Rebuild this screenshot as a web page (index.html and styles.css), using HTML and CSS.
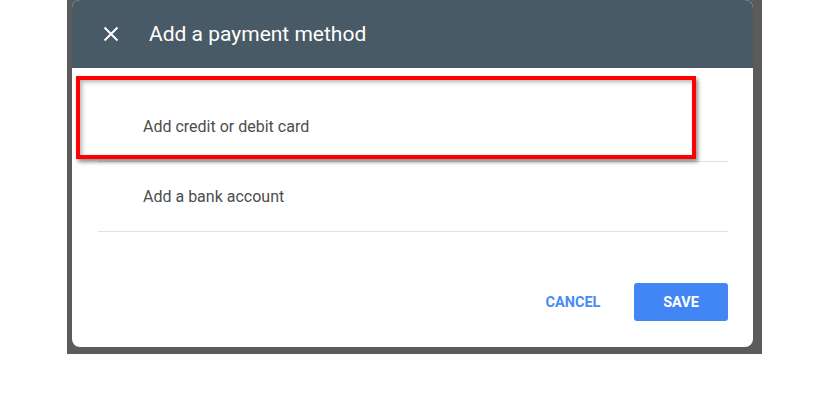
FILE: index.html
```html
<!DOCTYPE html>
<html>
<head>
<meta charset="utf-8">
<link rel="stylesheet" href="styles.css">
</head>
<body>
<div class="backdrop">
  <div class="dialog">
    <div class="header">
      <svg class="close" width="16" height="16" viewBox="0 0 16 16"><path d="M1.5 1.5L14.5 14.5M14.5 1.5L1.5 14.5" stroke="#fff" stroke-width="2" fill="none"/></svg>
      <span class="title">Add a payment method</span>
    </div>
    <div class="list">
      <div class="row">Add credit or debit card</div>
      <div class="row">Add a bank account</div>
    </div>
    <div class="footer">
      <button class="btn cancel">CANCEL</button>
      <button class="btn save">SAVE</button>
    </div>
    <div class="highlight"></div>
  </div>
</div>
</body>
</html>
```
FILE: styles.css
```css
html, body {
  margin: 0;
  padding: 0;
  background: #fff;
  font-family: Roboto, "Liberation Sans", sans-serif;
}
.backdrop {
  margin-left: 67px;
  width: 681px;
  height: 347px;
  padding: 0 9px 7px 5px;
  background: #5b5b5b;
}
.dialog {
  position: relative;
  width: 681px;
  height: 347px;
  background: #fff;
  border-radius: 8px;
  overflow: hidden;
}
.header {
  height: 68px;
  background: #485a65;
  display: flex;
  align-items: center;
  padding-left: 31px;
  box-sizing: border-box;
}
.close {
  display: block;
  margin-right: 30px;
}
.title {
  color: #fff;
  font-size: 21px;
  line-height: 1;
}
.list {
  padding: 24px 25px 0 26px;
}
.row {
  height: 69px;
  border-bottom: 1px solid #e0e0e0;
  display: flex;
  align-items: center;
  padding-left: 45px;
  font-size: 16px;
  color: #4d4d4d;
}
.footer {
  display: flex;
  justify-content: flex-end;
  align-items: center;
  gap: 16px;
  padding: 51px 25px 0 0;
}
.btn {
  font-family: Roboto, "Liberation Sans", sans-serif;
  font-size: 14.5px;
  font-weight: 700;
  border: none;
  border-radius: 3px;
  height: 38px;
  cursor: pointer;
}
.cancel {
  background: transparent;
  color: #4a8af4;
  width: 90px;
}
.save {
  background: #4285f4;
  color: #fff;
  width: 94px;
}
.highlight {
  position: absolute;
  left: 4px;
  top: 76px;
  width: 612px;
  height: 75px;
  border: 4px solid #f00;
  box-shadow: 2px 3px 4px rgba(0,0,0,0.45), inset 2px 2px 4px rgba(0,0,0,0.3);
}
```
